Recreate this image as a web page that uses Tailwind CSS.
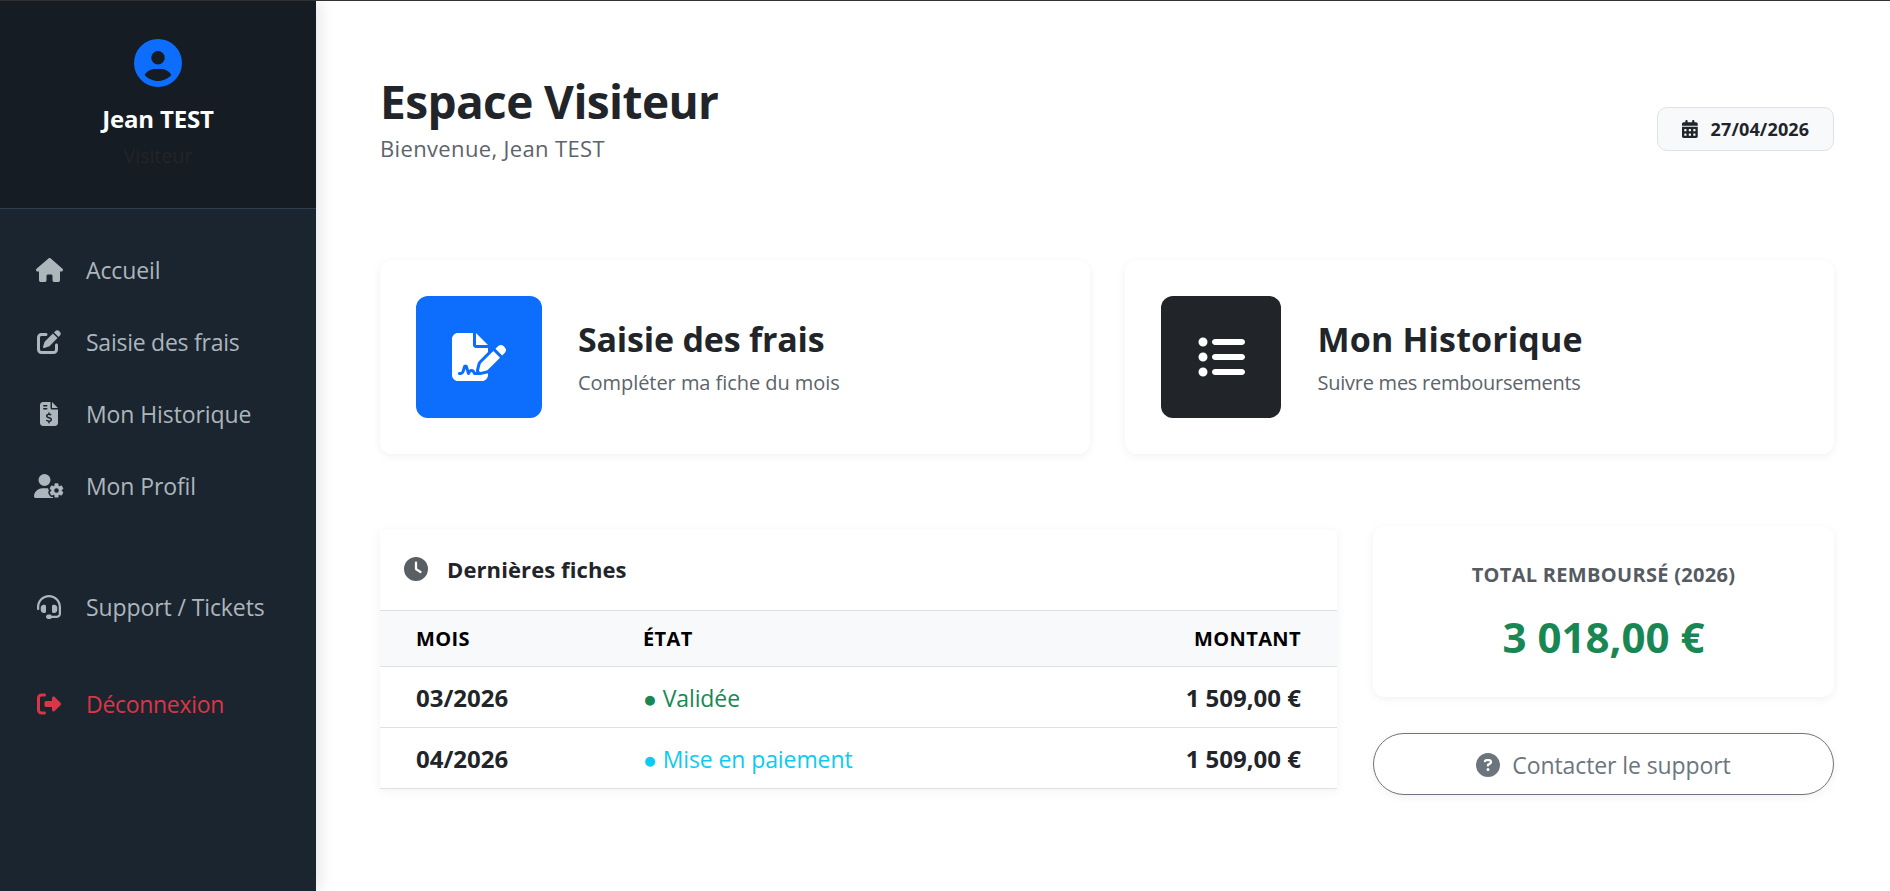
<!DOCTYPE html>
<html lang="fr">
<head>
<meta charset="utf-8">
<title>Espace Visiteur</title>
<script src="https://cdn.jsdelivr.net/npm/@tailwindcss/browser@4"></script>
</head>
<body class="h-[891px] overflow-hidden bg-white font-['Open_Sans','Noto_Sans',sans-serif] text-[#212529]">
<div class="flex h-full border-t border-[#333]">
  <aside class="flex w-[316px] shrink-0 flex-col bg-[#1a252f] shadow-[4px_0_15px_rgba(0,0,0,0.1)]">
    <div class="flex h-[208px] flex-col items-center border-b border-[#2c3e50] bg-[#151c23] pt-[38px]">
      <svg class="h-[48px] w-[48px] fill-[#0d6efd]" viewBox="0 0 512 512"><path d="M399 384.2C376.9 345.8 335.4 320 288 320H224c-47.4 0-88.9 25.8-111 64.2c35.2 39.2 86.2 63.8 143 63.8s107.8-24.7 143-63.8zM0 256a256 256 0 1 1 512 0A256 256 0 1 1 0 256zm256 16a72 72 0 1 0 0-144 72 72 0 1 0 0 144z"/></svg>
      <div class="mt-[17px] text-[24px] leading-[30px] font-bold tracking-[-0.2px] text-white">Jean TEST</div>
      <div class="mt-[7px] text-[20px] leading-[30px] tracking-[-0.2px] text-[#212529]">Visiteur</div>
    </div>
    <nav class="flex flex-col pt-[25px] text-[23px] tracking-[-0.1px] text-[#adb5bd]">
      <a class="flex h-[72px] items-center pl-[34px]"><span class="mr-[22px] flex w-[30px] justify-center"><svg class="h-[24px] fill-current" viewBox="0 0 576 512"><path d="M575.8 255.5c0 18-15 32.1-32 32.1h-32l.7 160.2c0 2.7-.2 5.4-.5 8.1V472c0 22.1-17.9 40-40 40H456c-1.1 0-2.2 0-3.3-.1c-1.4 .1-2.8 .1-4.2 .1H416 392c-22.1 0-40-17.9-40-40V448 384c0-17.7-14.3-32-32-32H256c-17.7 0-32 14.3-32 32v64 24c0 22.1-17.9 40-40 40H160 128.1c-1.5 0-3-.1-4.5-.2c-1.2 .1-2.4 .2-3.6 .2H104c-22.1 0-40-17.9-40-40V360c0-.9 0-1.9 .1-2.8V287.6H32c-18 0-32-14-32-32.1c0-9 3-17 10-24L266.4 8c7-7 15-8 22-8s15 2 21 7L564.8 231.5c8 7 12 15 11 24z"/></svg></span>Accueil</a>
      <a class="flex h-[72px] items-center pl-[34px]"><span class="mr-[22px] flex w-[30px] justify-center"><svg class="h-[24px] fill-current" viewBox="0 0 512 512"><path d="M471.6 21.7c-21.9-21.9-57.3-21.9-79.2 0L362.3 51.7l97.9 97.9 30.1-30.1c21.9-21.9 21.9-57.3 0-79.2L471.6 21.7zm-299.2 220c-6.1 6.1-10.8 13.6-13.5 21.9l-29.6 88.8c-2.9 8.6-.6 18.1 5.8 24.6s15.9 8.7 24.6 5.8l88.8-29.6c8.2-2.7 15.7-7.4 21.9-13.5L437.7 172.3 339.7 74.3 172.4 241.7zM96 64C43 64 0 107 0 160V416c0 53 43 96 96 96H352c53 0 96-43 96-96V320c0-17.7-14.3-32-32-32s-32 14.3-32 32v96c0 17.7-14.3 32-32 32H96c-17.7 0-32-14.3-32-32V160c0-17.7 14.3-32 32-32h96c17.7 0 32-14.3 32-32s-14.3-32-32-32H96z"/></svg></span><span class="tracking-[-0.25px]">Saisie des frais</span></a>
      <a class="flex h-[72px] items-center pl-[34px]"><span class="mr-[22px] flex w-[30px] justify-center"><svg class="h-[24px] fill-current" viewBox="0 0 384 512"><path d="M64 0C28.7 0 0 28.7 0 64V448c0 35.3 28.7 64 64 64H320c35.3 0 64-28.7 64-64V160H256c-17.7 0-32-14.3-32-32V0H64zM256 0V128H384L256 0zM64 80c0-8.8 7.2-16 16-16h64c8.8 0 16 7.2 16 16s-7.2 16-16 16H80c-8.8 0-16-7.2-16-16zm0 64c0-8.8 7.2-16 16-16h64c8.8 0 16 7.2 16 16s-7.2 16-16 16H80c-8.8 0-16-7.2-16-16zm128 72c8.8 0 16 7.2 16 16v17.3c8.5 1.2 16.7 3.1 24.1 5.1c8.5 2.3 13.6 11 11.3 19.6s-11 13.6-19.6 11.3c-11.1-3-22-5.2-32.1-5.3c-8.4-.1-17.4 1.8-23.6 5.5c-5.7 3.4-8.1 7.3-8.1 12.8c0 3.7 1.3 6.5 7.3 10.1c6.9 4.1 16.6 7.1 29.2 10.9l.5 .1 0 0 0 0c11.3 3.4 25.3 7.6 36.3 14.6c12.1 7.6 22.4 19.7 22.7 38.2c.3 19.3-9.6 33.3-22.9 41.6c-7.7 4.8-16.4 7.6-25.1 9.1V440c0 8.8-7.2 16-16 16s-16-7.2-16-16V422.2c-11.2-2.1-21.7-5.7-30.9-8.9l0 0c-2.1-.7-4.2-1.4-6.2-2.1c-8.4-2.8-12.9-11.9-10.1-20.2s11.9-12.9 20.2-10.1c2.5 .8 4.8 1.6 7.1 2.4l0 0 0 0 0 0c13.6 4.6 24.6 8.4 36.3 8.7c9.1 .3 17.9-1.7 23.7-5.3c5.1-3.2 7.9-7.3 7.8-14c-.1-4.6-1.8-7.8-7.7-11.6c-6.8-4.3-16.5-7.4-29-11.2l-1.6-.5 0 0c-11-3.3-24.3-7.3-34.8-13.7c-12-7.2-22.6-18.9-22.7-37.3c-.1-19.4 10.8-32.8 23.8-40.5c7.5-4.4 15.8-7.2 24.1-8.7V232c0-8.8 7.2-16 16-16z"/></svg></span>Mon Historique</a>
      <a class="flex h-[72px] items-center pl-[34px]"><span class="mr-[22px] flex w-[30px] justify-center"><svg class="h-[24px] fill-current" viewBox="0 0 640 512"><path d="M224 0a128 128 0 1 1 0 256A128 128 0 1 1 224 0zM178.3 304h91.4c11.8 0 23.4 1.2 34.5 3.3c-2.1 18.5 7.4 35.6 21.8 44.8c-16.6 10.6-26.7 31.6-20 53.3c4 12.9 9.4 25.5 16.4 37.6s15.2 23.1 24.4 33c15.7 16.9 39.6 18.4 57.2 8.7v.9c0 9.2 2.7 18.5 7.9 26.3H29.7C13.3 512 0 498.7 0 482.3C0 383.8 79.8 304 178.3 304zM436 218.2c0-7 4.5-13.3 11.3-14.8c10.5-2.4 21.5-3.7 32.7-3.7s22.2 1.3 32.7 3.7c6.8 1.5 11.3 7.8 11.3 14.8v30.6c7.9 3.4 15.4 7.7 22.3 12.8l24.9-14.3c6.1-3.5 13.7-2.7 18.5 2.4c7.6 8.1 14.3 17.2 20.1 27.2s10.3 20.4 13.5 31c2.1 6.7-1.1 13.7-7.2 17.2l-25 14.4c.4 4 .7 8.1 .7 12.3s-.2 8.2-.7 12.3l25 14.4c6.1 3.5 9.2 10.5 7.2 17.2c-3.3 10.6-7.8 21-13.5 31s-12.5 19.1-20.1 27.2c-4.8 5.1-12.5 5.9-18.5 2.4l-24.9-14.3c-6.9 5.1-14.3 9.4-22.3 12.8l0 30.6c0 7-4.5 13.3-11.3 14.8c-10.5 2.4-21.5 3.7-32.7 3.7s-22.2-1.3-32.7-3.7c-6.8-1.5-11.3-7.8-11.3-14.8V454.8c-8-3.4-15.6-7.7-22.5-12.9l-24.7 14.3c-6.1 3.5-13.7 2.7-18.5-2.4c-7.6-8.1-14.3-17.2-20.1-27.2s-10.3-20.4-13.5-31c-2.1-6.7 1.1-13.7 7.2-17.2l24.8-14.3c-.4-4.1-.7-8.2-.7-12.4s.2-8.3 .7-12.4L343.8 325c-6.1-3.5-9.2-10.5-7.2-17.2c3.3-10.6 7.7-21 13.5-31s12.5-19.1 20.1-27.2c4.8-5.1 12.4-5.9 18.5-2.4l24.8 14.3c6.9-5.1 14.5-9.4 22.5-12.9V218.2zm92.1 133.5a48.1 48.1 0 1 0 -96.1 0 48.1 48.1 0 1 0 96.1 0z"/></svg></span>Mon Profil</a>
      <a class="mt-[49px] flex h-[72px] items-center pl-[34px]"><span class="mr-[22px] flex w-[30px] justify-center"><svg class="h-[24px] fill-current" viewBox="0 0 512 512"><path d="M256 48C141.1 48 48 141.1 48 256v40c0 13.3-10.7 24-24 24s-24-10.7-24-24V256C0 114.6 114.6 0 256 0S512 114.6 512 256V400.1c0 48.6-39.4 88-88.1 88L313.6 488c-8.3 14.3-23.8 24-41.6 24H240c-26.5 0-48-21.5-48-48s21.5-48 48-48h32c17.8 0 33.3 9.7 41.6 24l110.4 .1c22.1 0 40-17.9 40-40V256c0-114.9-93.1-208-208-208zM144 208h16c17.7 0 32 14.3 32 32V352c0 17.7-14.3 32-32 32H144c-35.3 0-64-28.7-64-64V272c0-35.3 28.7-64 64-64zm224 0c35.3 0 64 28.7 64 64v48c0 35.3-28.7 64-64 64H352c-17.7 0-32-14.3-32-32V240c0-17.7 14.3-32 32-32h16z"/></svg></span>Support / Tickets</a>
      <a class="mt-[25px] flex h-[72px] items-center pl-[34px] text-[#dc3545]"><span class="mr-[22px] flex w-[30px] justify-center"><svg class="h-[24px] fill-current" viewBox="0 0 512 512"><path d="M377.9 105.9L500.7 228.7c7.2 7.2 11.3 17.1 11.3 27.3s-4.1 20.1-11.3 27.3L377.9 406.1c-6.4 6.4-15 9.9-24 9.9c-18.7 0-33.9-15.2-33.9-33.9l0-62.1-128 0c-17.7 0-32-14.3-32-32l0-64c0-17.7 14.3-32 32-32l128 0 0-62.1c0-18.7 15.2-33.9 33.9-33.9c9 0 17.6 3.6 24 9.9zM160 96L96 96c-17.7 0-32 14.3-32 32l0 256c0 17.7 14.3 32 32 32l64 0c17.7 0 32 14.3 32 32s-14.3 32-32 32l-64 0c-53 0-96-43-96-96L0 128C0 75 43 32 96 32l64 0c17.7 0 32 14.3 32 32s-14.3 32-32 32z"/></svg></span><span class="tracking-[-0.3px]">Déconnexion</span></a>
    </nav>
  </aside>
  <main class="min-w-0 flex-1 pt-[71px] pr-[56px] pl-[64px]">
    <header class="flex h-[93px] items-start justify-between">
      <div>
        <h1 class="mb-[2px] text-[46px] leading-[58px] font-bold tracking-[-0.6px]">Espace Visiteur</h1>
        <p class="text-[22px] leading-[32px] tracking-[0.35px] text-[#5c636a]">Bienvenue, Jean TEST</p>
      </div>
      <div class="mt-[35px] flex h-[44px] w-[177px] items-center justify-center gap-[13px] rounded-[10px] border border-[#dee2e6] bg-[#f8f9fa] text-[18px] font-bold tracking-[0.15px]">
        <svg class="h-[18px] fill-current" viewBox="0 0 448 512"><path d="M128 0c17.7 0 32 14.3 32 32V64H288V32c0-17.7 14.3-32 32-32s32 14.3 32 32V64h48c26.5 0 48 21.5 48 48v48H0V112C0 85.5 21.5 64 48 64H96V32c0-17.7 14.3-32 32-32zM0 192H448V464c0 26.5-21.5 48-48 48H48c-26.5 0-48-21.5-48-48V192zm64 80v32c0 8.8 7.2 16 16 16h32c8.8 0 16-7.2 16-16V272c0-8.8-7.2-16-16-16H80c-8.8 0-16 7.2-16 16zm128 0v32c0 8.8 7.2 16 16 16h32c8.8 0 16-7.2 16-16V272c0-8.8-7.2-16-16-16H208c-8.8 0-16 7.2-16 16zm144-16c-8.8 0-16 7.2-16 16v32c0 8.8 7.2 16 16 16h32c8.8 0 16-7.2 16-16V272c0-8.8-7.2-16-16-16H336zM64 400v32c0 8.8 7.2 16 16 16h32c8.8 0 16-7.2 16-16V400c0-8.8-7.2-16-16-16H80c-8.8 0-16 7.2-16 16zm144-16c-8.8 0-16 7.2-16 16v32c0 8.8 7.2 16 16 16h32c8.8 0 16-7.2 16-16V400c0-8.8-7.2-16-16-16H208zm112 16v32c0 8.8 7.2 16 16 16h32c8.8 0 16-7.2 16-16V400c0-8.8-7.2-16-16-16H336c-8.8 0-16 7.2-16 16z"/></svg>
        27/04/2026
      </div>
    </header>
    <section class="mt-[95px] grid grid-cols-2 gap-[35px]">
      <a class="flex h-[194px] items-center rounded-[12px] bg-white p-[36px] shadow-[0_2px_10px_rgba(0,0,0,0.06)]">
        <div class="flex h-[122px] w-[126px] items-center justify-center rounded-[12px] bg-[#0d6efd]">
          <svg class="h-[48px] fill-white" viewBox="0 0 576 512"><path d="M64 0C28.7 0 0 28.7 0 64V448c0 35.3 28.7 64 64 64H320c35.3 0 64-28.7 64-64V428.7c-2.7 1.1-5.4 2-8.2 2.7l-60.1 15c-3 .7-6 1.2-9 1.4c-.9 .1-1.8 .2-2.7 .2H240c-6.1 0-11.6-3.4-14.3-8.8l-8.8-17.7c-1.7-3.4-5.1-5.5-8.8-5.5s-7.2 2.1-8.8 5.5l-8.8 17.7c-2.9 5.9-9.2 9.4-15.7 8.8s-12.1-5.1-13.9-11.3L144 381l-9.8 32.8c-6.1 20.3-24.8 34.2-46 34.2H80c-8.8 0-16-7.2-16-16s7.2-16 16-16h8.2c7.1 0 13.3-4.6 15.3-11.4l14.9-49.5c3.4-11.3 13.8-19.1 25.6-19.1s22.2 7.8 25.6 19.1l11.6 38.6c7.4-6.2 16.8-9.7 26.8-9.7c15.9 0 30.4 9 37.5 23.2l4.4 8.8h8.9c-3.1-8.8-3.7-18.4-1.4-27.8l15-60.1c2.8-11.3 8.6-21.5 16.8-29.7L384 203.6V160H256c-17.7 0-32-14.3-32-32V0H64zM256 0V128H384L256 0zM549.8 139.7c-15.6-15.6-40.9-15.6-56.6 0l-29.4 29.4 71 71 29.4-29.4c15.6-15.6 15.6-40.9 0-56.6l-14.4-14.4zM311.9 321c-4.1 4.1-7 9.2-8.4 14.9l-15 60.1c-1.4 5.5 .2 11.2 4.2 15.2s9.7 5.6 15.2 4.2l60.1-15c5.6-1.4 10.8-4.3 14.9-8.4L512.1 262.7l-71-71L311.9 321z"/></svg>
        </div>
        <div class="ml-[36px]">
          <h2 class="text-[34px] leading-[44px] font-bold tracking-[-0.2px]">Saisie des frais</h2>
          <p class="mt-[8px] text-[20px] leading-[28px] tracking-[-0.05px] text-[#5c636a]">Compléter ma fiche du mois</p>
        </div>
      </a>
      <a class="flex h-[194px] items-center rounded-[12px] bg-white p-[36px] shadow-[0_2px_10px_rgba(0,0,0,0.06)]">
        <div class="flex h-[122px] w-[120px] items-center justify-center rounded-[12px] bg-[#212529]">
          <svg class="h-[48px] fill-white" viewBox="0 0 512 512"><path d="M64 144a48 48 0 1 0 0-96 48 48 0 1 0 0 96zM192 64c-17.7 0-32 14.3-32 32s14.3 32 32 32H480c17.7 0 32-14.3 32-32s-14.3-32-32-32H192zm0 160c-17.7 0-32 14.3-32 32s14.3 32 32 32H480c17.7 0 32-14.3 32-32s-14.3-32-32-32H192zm0 160c-17.7 0-32 14.3-32 32s14.3 32 32 32H480c17.7 0 32-14.3 32-32s-14.3-32-32-32H192zM64 464a48 48 0 1 0 0-96 48 48 0 1 0 0 96zm48-208a48 48 0 1 0 -96 0 48 48 0 1 0 96 0z"/></svg>
        </div>
        <div class="ml-[37px]">
          <h2 class="text-[34px] leading-[44px] font-bold tracking-[0.15px]">Mon Historique</h2>
          <p class="mt-[8px] text-[20px] leading-[28px] tracking-[-0.25px] text-[#5c636a]">Suivre mes remboursements</p>
        </div>
      </a>
    </section>
    <section class="mt-[72px] flex gap-[36px]">
      <div class="mt-[4px] w-[957px] self-start bg-white shadow-[0_2px_10px_rgba(0,0,0,0.06)]">
        <div class="flex h-[80px] items-center pb-[2px] pl-[24px]">
          <svg class="mr-[19px] h-[24px] w-[24px] fill-[#5a5f64]" viewBox="0 0 512 512"><path d="M256 0a256 256 0 1 1 0 512A256 256 0 1 1 256 0zM232 120V256c0 8 4 15.5 10.7 20l96 64c11 7.4 25.9 4.4 33.3-6.7s4.4-25.9-6.7-33.3L280 243.2V120c0-13.3-10.7-24-24-24s-24 10.7-24 24z"/></svg>
          <h3 class="text-[22px] font-bold tracking-[0.1px]">Dernières fiches</h3>
        </div>
        <table class="w-full border-collapse">
          <thead>
            <tr class="h-[56px] border-y border-[#dee2e6] bg-[#f8f9fa] text-[20px] font-bold tracking-[0.4px] text-black">
              <th class="w-[263px] pl-[36px] text-left">MOIS</th>
              <th class="text-left">ÉTAT</th>
              <th class="pr-[36px] text-right">MONTANT</th>
            </tr>
          </thead>
          <tbody>
            <tr class="h-[61px] border-b border-[#dee2e6]">
              <td class="pt-[2px] pl-[36px] text-[24px] font-bold">03/2026</td>
              <td class="pt-[2px] text-[23px] tracking-[-0.1px] text-[#198754]">● Validée</td>
              <td class="pt-[2px] pr-[36px] text-right text-[24px] font-bold">1 509,00 €</td>
            </tr>
            <tr class="h-[61px] border-b border-[#dee2e6]">
              <td class="pt-[2px] pl-[36px] text-[24px] font-bold">04/2026</td>
              <td class="pt-[2px] text-[23px] tracking-[-0.1px] text-[#0dcaf0]">● Mise en paiement</td>
              <td class="pt-[2px] pr-[36px] text-right text-[24px] font-bold">1 509,00 €</td>
            </tr>
          </tbody>
        </table>
      </div>
      <div class="flex flex-1 flex-col gap-[36px]">
        <div class="flex h-[171px] flex-col items-center justify-center rounded-[12px] bg-white shadow-[0_2px_10px_rgba(0,0,0,0.06)]">
          <div class="text-[20px] leading-[28px] font-bold tracking-[0.3px] text-[#555b61]">TOTAL REMBOURSÉ (2026)</div>
          <div class="mt-[22px] text-[42px] leading-[52px] font-bold text-[#198754]">3 018,00 €</div>
        </div>
        <a class="flex h-[62px] items-center justify-center gap-[12px] rounded-full border border-[#6c757d] bg-white pt-[2px] text-[23px] tracking-[-0.1px] text-[#6c757d] shadow-[0_2px_10px_rgba(0,0,0,0.06)]">
          <svg class="h-[24px] w-[24px] fill-current" viewBox="0 0 512 512"><path d="M256 512A256 256 0 1 0 256 0a256 256 0 1 0 0 512zM169.8 165.3c7.9-22.3 29.1-37.3 52.8-37.3h58.3c34.9 0 63.1 28.3 63.1 63.1c0 22.6-12.1 43.5-31.7 54.8L280 264.4c-.2 13-10.9 23.6-24 23.6c-13.3 0-24-10.7-24-24V250.5c0-8.6 4.6-16.5 12.1-20.8l44.3-25.4c4.7-2.7 7.6-7.7 7.6-13.1c0-8.4-6.8-15.1-15.1-15.1H222.6c-3.4 0-6.4 2.1-7.5 5.3l-.4 1.2c-4.4 12.5-18.2 19-30.6 14.6s-19-18.2-14.6-30.6l.4-1.2zM224 352a32 32 0 1 1 64 0 32 32 0 1 1 -64 0z"/></svg>
          Contacter le support
        </a>
      </div>
    </section>
  </main>
</div>
</body>
</html>
